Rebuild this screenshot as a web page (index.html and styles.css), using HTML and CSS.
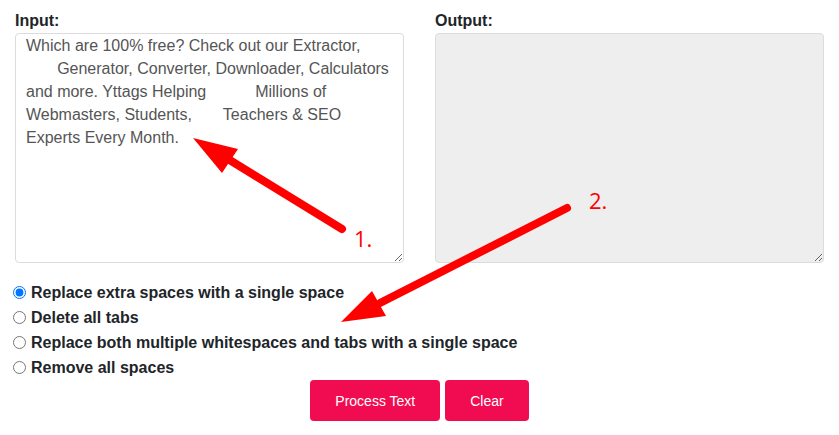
FILE: index.html
```html
<!DOCTYPE html>
<html lang="en">
<head>
<meta charset="utf-8">
<title>Remove Extra Spaces</title>
<link rel="stylesheet" href="styles.css">
</head>
<body>
<div class="page">
  <div class="io">
    <div class="field">
      <label class="field-label" for="input">Input:</label>
      <textarea id="input" class="box">Which are 100% free? Check out our Extractor,
       Generator, Converter, Downloader, Calculators
and more. Yttags Helping           Millions of
Webmasters, Students,       Teachers &amp; SEO
Experts Every Month.</textarea>
    </div>
    <div class="field">
      <label class="field-label" for="output">Output:</label>
      <textarea id="output" class="box box-out" readonly></textarea>
    </div>
  </div>
  <div class="options">
    <label class="opt"><input type="radio" name="mode" checked> Replace extra spaces with a single space</label>
    <label class="opt"><input type="radio" name="mode"> Delete all tabs</label>
    <label class="opt"><input type="radio" name="mode"> Replace both multiple whitespaces and tabs with a single space</label>
    <label class="opt"><input type="radio" name="mode"> Remove all spaces</label>
  </div>
  <div class="actions">
    <button class="btn" type="button">Process Text</button>
    <button class="btn" type="button">Clear</button>
  </div>
  <svg class="annot" width="839" height="435" viewBox="0 0 839 435" aria-hidden="true">
    <line x1="342" y1="229" x2="228" y2="159" stroke="#ff0000" stroke-width="8" stroke-linecap="round"/>
    <polygon points="193,138 238,149 222,173" fill="#ff0000"/>
    <line x1="567" y1="208" x2="380" y2="303" stroke="#ff0000" stroke-width="8" stroke-linecap="round"/>
    <polygon points="341,322 372,291 386,316" fill="#ff0000"/>
    <text x="354" y="247" class="num">1.</text>
    <text x="589" y="209" class="num">2.</text>
  </svg>
</div>
</body>
</html>
```
FILE: styles.css
```css
html, body {
  margin: 0;
  padding: 0;
  background: #ffffff;
}

body {
  font-family: "Liberation Sans", Arial, sans-serif;
  color: #212529;
}

.page {
  position: relative;
  width: 839px;
  height: 435px;
  overflow: hidden;
  padding-top: 9px;
  box-sizing: border-box;
}

.io {
  display: grid;
  grid-template-columns: 1fr 1fr;
  column-gap: 31px;
  padding: 0 15px;
}

.field {
  display: flex;
  flex-direction: column;
}

.field-label {
  font-size: 16px;
  font-weight: bold;
  line-height: 24px;
  color: #212529;
}

.box {
  display: block;
  box-sizing: border-box;
  width: 100%;
  height: 230px;
  margin: 0;
  padding: 0 10px;
  border: 1px solid #dcdcdc;
  border-radius: 4px;
  font-family: "Liberation Sans", Arial, sans-serif;
  font-size: 16px;
  line-height: 23px;
  color: #555555;
  background: #ffffff;
  overflow: hidden;
  white-space: pre-wrap;
}

.box-out {
  background: #eeeeee;
}

.options {
  display: flex;
  flex-direction: column;
  margin-top: 17px;
  padding-left: 9px;
}

.opt {
  display: flex;
  align-items: center;
  font-size: 16px;
  font-weight: bold;
  line-height: 25px;
  height: 25px;
  color: #212529;
}

.opt input {
  margin: 0 5px 0 4px;
  width: 13px;
  height: 13px;
}

.actions {
  display: flex;
  justify-content: center;
  gap: 5px;
  margin-top: 0;
}

.btn {
  height: 41px;
  padding: 0 25px;
  border: none;
  border-radius: 4px;
  background: #f10c51;
  color: #ffffff;
  font-family: "Liberation Sans", Arial, sans-serif;
  font-size: 14px;
}

.annot {
  position: absolute;
  left: 0;
  top: 0;
  pointer-events: none;
}

.num {
  font-family: "Open Sans", "DejaVu Sans", sans-serif;
  font-size: 22px;
  fill: #ff0000;
}
```
